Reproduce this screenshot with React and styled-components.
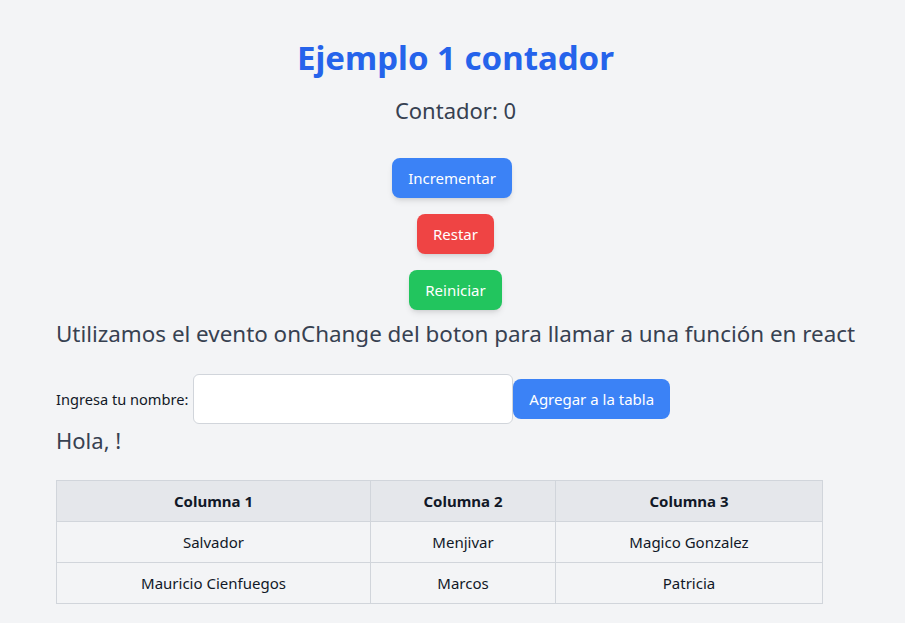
import styled, { createGlobalStyle } from 'styled-components'

const GlobalStyle = createGlobalStyle`
  body {
    margin: 0;
    background-color: #f3f4f6;
    font-family: "Noto Sans", "Open Sans", sans-serif;
  }
`

const rows = [
  ['Salvador', 'Menjivar', 'Magico Gonzalez'],
  ['Mauricio Cienfuegos', 'Marcos', 'Patricia'],
]

function App() {
  return (
    <>
      <GlobalStyle />
      <Page>
        <Title>Ejemplo 1 contador</Title>
        <Counter>Contador: 0</Counter>

        <Buttons>
          <Button $color="#3b82f6" $shift={7}>Incrementar</Button>
          <Button $color="#ef4444">Restar</Button>
          <Button $color="#22c55e">Reiniciar</Button>
        </Buttons>

        <Lead>Utilizamos el evento onChange del boton para llamar a una función en react</Lead>

        <FormRow>
          <Label htmlFor="nombre">Ingresa tu nombre:</Label>
          <Input id="nombre" type="text" />
          <AddButton>Agregar a la tabla</AddButton>
        </FormRow>

        <Greeting>Hola, !</Greeting>

        <Table>
          <colgroup>
            <col style={{ width: 314 }} />
            <col style={{ width: 185 }} />
            <col style={{ width: 267 }} />
          </colgroup>
          <thead>
            <tr>
              <Th>Columna 1</Th>
              <Th>Columna 2</Th>
              <Th>Columna 3</Th>
            </tr>
          </thead>
          <tbody>
            {rows.map((r) => (
              <tr key={r[0]}>
                {r.map((c) => (
                  <Td key={c}>{c}</Td>
                ))}
              </tr>
            ))}
          </tbody>
        </Table>
      </Page>
    </>
  )
}

export default App

const Page = styled.div`
  padding: 38px 50px 20px 56px;
`

const Title = styled.h1`
  margin: 0;
  text-align: center;
  font-size: 33px;
  line-height: 40px;
  font-weight: 700;
  color: #2563eb;
`

const Counter = styled.p`
  margin: 16px 0 0;
  text-align: center;
  font-size: 22px;
  line-height: 32px;
  color: #374151;
`

const Buttons = styled.div`
  display: flex;
  flex-direction: column;
  align-items: center;
  gap: 16px;
  margin-top: 32px;
`

const Button = styled.button`
  height: 40px;
  padding: 0 16px;
  margin-right: ${(p) => p.$shift || 0}px;
  border: none;
  border-radius: 8px;
  background-color: ${(p) => p.$color};
  color: #fff;
  font-family: inherit;
  font-size: 15px;
  box-shadow: 0 4px 6px -1px rgba(0, 0, 0, 0.1), 0 2px 4px -2px rgba(0, 0, 0, 0.1);
`

const Lead = styled.p`
  margin: 8px 0 0;
  font-size: 22.4px;
  line-height: 32px;
  white-space: nowrap;
  color: #374151;
`

const FormRow = styled.div`
  display: flex;
  align-items: center;
  margin-top: 24px;
`

const Label = styled.label`
  font-size: 14.6px;
  color: #111827;
  margin-right: 5px;
`

const Input = styled.input`
  width: 320px;
  height: 50px;
  box-sizing: border-box;
  border: 1px solid #d1d5db;
  border-radius: 6px;
  background: #fff;
`

const AddButton = styled.button`
  height: 40px;
  padding: 0 16px;
  border: none;
  border-radius: 8px;
  background-color: #3b82f6;
  color: #fff;
  font-family: inherit;
  font-size: 15px;
`

const Greeting = styled.p`
  margin: 0;
  font-size: 22px;
  line-height: 32px;
  color: #374151;
`

const Table = styled.table`
  margin-top: 24px;
  width: 767px;
  border-collapse: collapse;
  table-layout: fixed;
  font-size: 15px;
  color: #111827;
`

const Th = styled.th`
  height: 40px;
  padding: 0 8px;
  border: 1px solid #d1d5db;
  background-color: #e5e7eb;
  font-weight: 700;
  text-align: center;
`

const Td = styled.td`
  height: 40px;
  padding: 0 8px;
  border: 1px solid #d1d5db;
  text-align: center;
`
